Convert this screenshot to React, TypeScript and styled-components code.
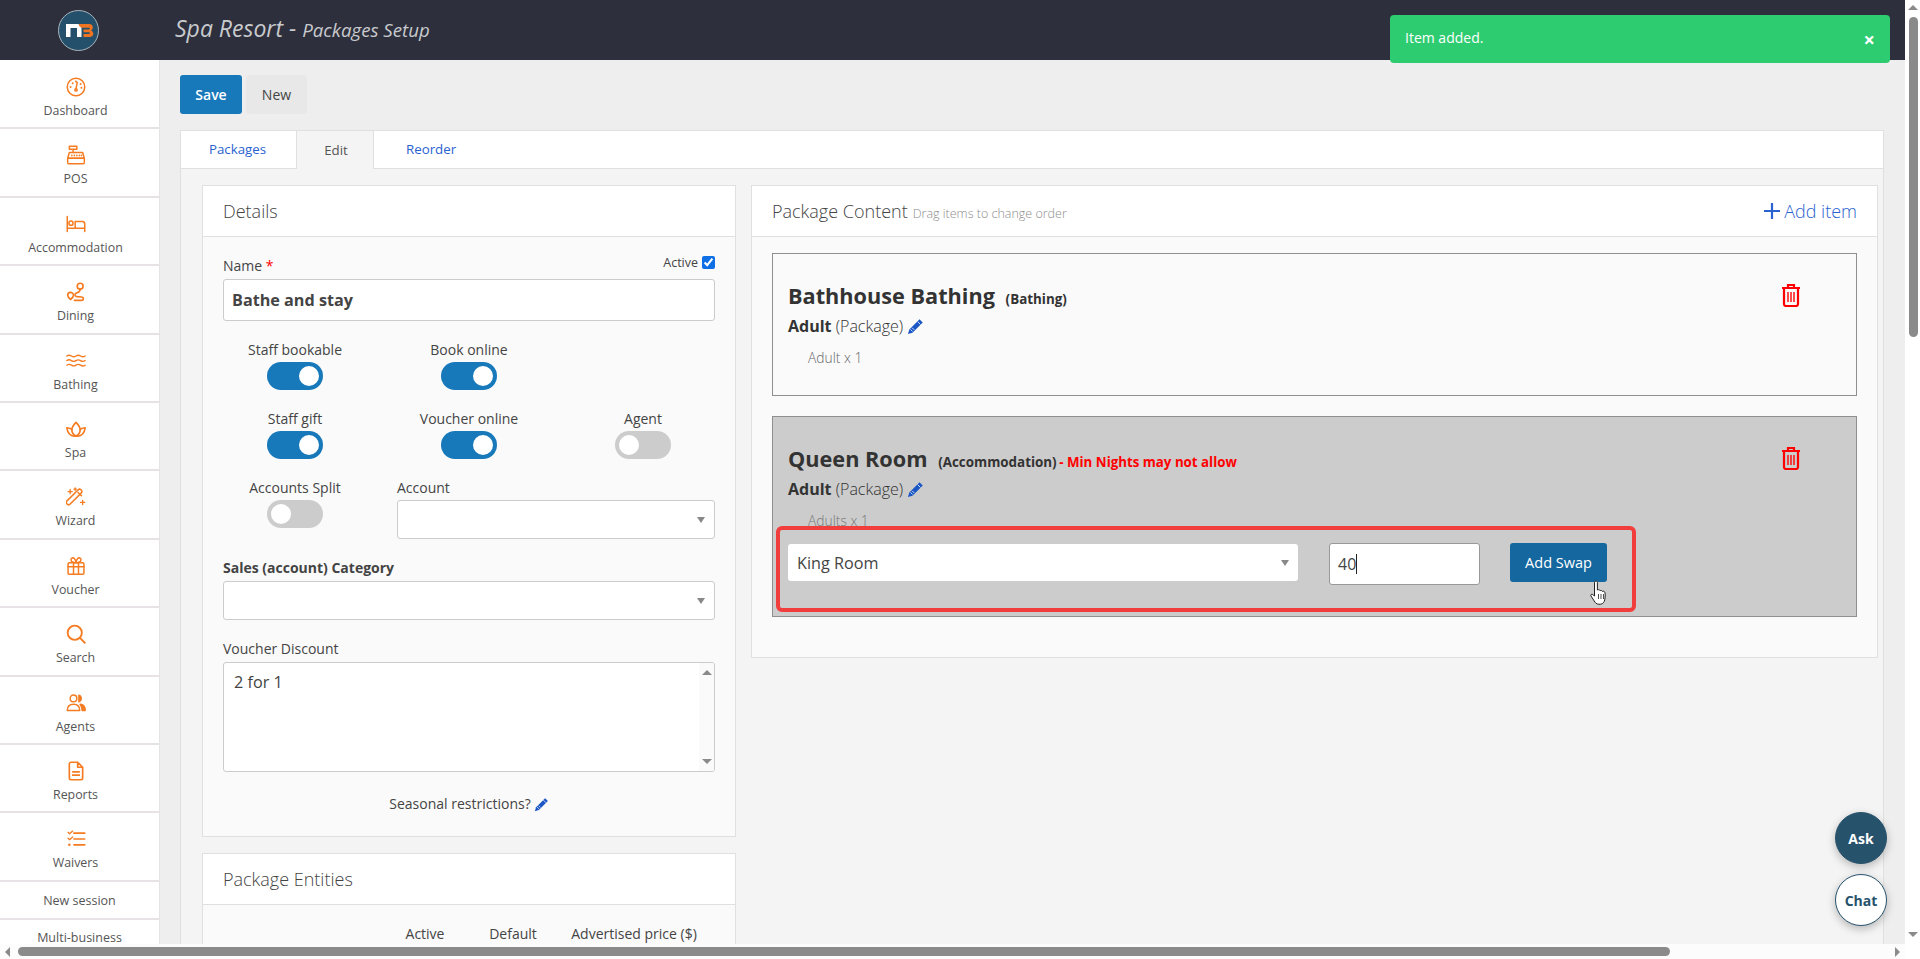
import React from "react";
import styled, { createGlobalStyle } from "styled-components";

const Global = createGlobalStyle`
  html, body { margin: 0; padding: 0; height: 100%; overflow: hidden; background: #fff; }
  * { box-sizing: border-box; }
  body { font-family: "Open Sans", "Liberation Sans", sans-serif; color: #444; }
`;

const Shell = styled.div`
  display: grid;
  grid-template-columns: 1905px 15px;
  grid-template-rows: 944px 15px;
  width: 1920px;
  height: 959px;
  overflow: hidden;
  position: relative;
`;
const Viewport = styled.div`
  overflow: hidden;
  display: flex;
  flex-direction: column;
  background: #eee;
  position: relative;
`;
const VBar = styled.div`
  background: #fff;
  display: flex;
  flex-direction: column;
  align-items: center;
  justify-content: space-between;
  padding: 5px 0 7px;
`;
const HBar = styled.div`
  background: #fcfcfc;
  display: flex;
  align-items: center;
  padding: 0 5px 0 5px;
`;
const Arrow = styled.span<{ $dir: "up" | "down" | "left" | "right" }>`
  width: 0;
  height: 0;
  flex: none;
  ${(p) =>
    p.$dir === "up"
      ? "border-left:5px solid transparent;border-right:5px solid transparent;border-bottom:5px solid #8a8a8a;"
      : p.$dir === "down"
      ? "border-left:5px solid transparent;border-right:5px solid transparent;border-top:5px solid #8a8a8a;"
      : p.$dir === "left"
      ? "border-top:5px solid transparent;border-bottom:5px solid transparent;border-right:5px solid #8a8a8a;"
      : "border-top:5px solid transparent;border-bottom:5px solid transparent;border-left:5px solid #8a8a8a;"}
`;
const VThumb = styled.div`
  width: 9px;
  height: 320px;
  margin: 7px 0 auto 2px;
  border-radius: 5px;
  background: #8a8a8a;
`;
const HThumb = styled.div`
  width: 1652px;
  height: 9px;
  margin: 0 auto 0 8px;
  border-radius: 5px;
  background: #8a8a8a;
`;
const Corner = styled.div`
  background: #fff;
`;

const Header = styled.header`
  flex: none;
  height: 60px;
  background: #2d2f3c;
  display: flex;
  align-items: center;
  padding-left: 58px;
`;
const Brand = styled.svg`
  width: 41px;
  height: 41px;
  flex: none;
  margin-right: 76px;
`;
const Title = styled.div`
  color: #c8cacd;
  font-style: italic;
  font-size: 23px;
  font-weight: 400;
  margin-top: -4px;
  white-space: nowrap;
  small {
    font-size: 18.7px;
  }
`;
const Toast = styled.div`
  position: absolute;
  left: 1390px;
  top: 15px;
  width: 500px;
  height: 48px;
  border-radius: 4px;
  background: #2ecc71;
  color: #fff;
  font-size: 14px;
  padding: 0 15px 3px;
  display: flex;
  align-items: center;
  justify-content: space-between;
  z-index: 5;
`;
const ToastClose = styled.span`
  font-size: 20px;
  font-weight: 700;
  line-height: 1;
  margin-top: 5px;
`;

const Body = styled.div`
  flex: 1;
  display: flex;
  min-height: 0;
`;
const Sidebar = styled.nav`
  width: 160px;
  flex: none;
  background: #fff;
  border-right: 1px solid #e4e4e4;
  overflow: hidden;
  padding-top: 1px;
`;
const NavItem = styled.div`
  height: 68.4px;
  border-bottom: 2px solid #e6e2e6;
  display: flex;
  flex-direction: column;
  align-items: center;
  padding: 16px 8px 0 0;
  font-size: 12.4px;
  color: #555;
  svg {
    width: 20px;
    height: 20px;
    flex: none;
    color: #f57c22;
    margin-bottom: 4px;
  }
  span {
    line-height: 20px;
  }
`;
const NavLink = styled.div`
  height: 38px;
  border-bottom: 2px solid #e6e2e6;
  display: flex;
  align-items: center;
  justify-content: center;
  font-size: 12.5px;
  line-height: 13px;
  color: #555;
  padding-top: 2px;
  &:last-child {
    border: 0;
    height: 24px;
    padding-top: 11px;
    align-items: flex-start;
  }
`;

const Main = styled.main`
  flex: 1;
  min-width: 0;
  padding: 15px 21px 0 20px;
`;
const Toolbar = styled.div`
  display: flex;
  gap: 4px;
  height: 39px;
  margin-bottom: 16px;
`;
const Btn = styled.button<{ $primary?: boolean }>`
  border: 0;
  border-radius: 3px;
  font-family: inherit;
  font-size: 14px;
  font-weight: ${(p) => (p.$primary ? 600 : 400)};
  width: ${(p) => (p.$primary ? 62 : 61)}px;
  background: ${(p) => (p.$primary ? "#1778ba" : "#e8e8e8")};
  color: ${(p) => (p.$primary ? "#fff" : "#444")};
`;
const Tabs = styled.div`
  display: flex;
  height: 39px;
  background: #fff;
  border: 1px solid #e0e0e0;
  border-bottom: 0;
  font-size: 13.3px;
`;
const Tab = styled.div<{ $active?: boolean; $w?: number }>`
  width: ${(p) => (p.$w ? `${p.$w}px` : "auto")};
  flex: ${(p) => (p.$w ? "none" : "1")};
  display: flex;
  align-items: center;
  justify-content: ${(p) => (p.$w ? "center" : "flex-start")};
  padding: ${(p) => (p.$w ? (p.$active ? "0 0 1px 2px" : "0 2px 1px 0") : "0 0 1px 32px")};
  color: ${(p) => (p.$active ? "#555" : "#2a62d0")};
  background: ${(p) => (p.$active ? "#f4f4f4" : "#fff")};
  border-right: ${(p) => (p.$w ? "1px solid #e0e0e0" : "0")};
  border-bottom: ${(p) => (p.$active ? "0" : "1px solid #e0e0e0")};
`;
const Panel = styled.div`
  background: #f4f4f4;
  border: 1px solid #e0e0e0;
  border-top: 0;
  border-bottom: 0;
  padding: 16px 6px 0 21px;
  display: grid;
  grid-template-columns: 534px 1127px;
  gap: 15px;
  align-items: start;
  height: 780px;
`;
const Column = styled.div`
  display: flex;
  flex-direction: column;
  gap: 16px;
`;
const Card = styled.section`
  background: #fafafa;
  border: 1px solid #e0e0e0;
`;
const CardHead = styled.div`
  height: 51px;
  background: #fff;
  border-bottom: 1px solid #e0e0e0;
  display: flex;
  align-items: center;
  justify-content: space-between;
  padding: 0 20px;
  font-size: 18px;
  font-weight: 300;
  color: #444;
  small {
    font-size: 12.5px;
    color: #8d8d8d;
    margin-left: 5px;
  }
`;
const AddItem = styled.div`
  display: flex;
  align-items: center;
  color: #2a62d0;
  font-size: 18px;
  font-weight: 300;
  gap: 3px;
  svg {
    width: 18px;
    height: 18px;
  }
`;
const FormBody = styled.div`
  padding: 18px 20px 0;
  height: 599px;
`;
const LabelRow = styled.div`
  display: flex;
  justify-content: space-between;
  align-items: flex-start;
  font-size: 14px;
  height: 24px;
  line-height: 20px;
  padding-top: 1px;
`;
const Req = styled.span`
  color: #f00;
`;
const ActiveWrap = styled.label`
  display: flex;
  align-items: center;
  gap: 4px;
  font-size: 12.5px;
  margin-top: -3px;
  input {
    width: 13px;
    height: 13px;
    margin: 0 0 1px;
    accent-color: #0f70e6;
  }
`;
const NameInput = styled.input`
  width: 100%;
  height: 42px;
  display: block;
  border: 1px solid #ccc;
  border-radius: 3px;
  background: #fff;
  font: 700 16.2px "Open Sans", sans-serif;
  color: #444;
  padding: 0 8px;
  outline: 0;
`;
const ToggleGrid = styled.div`
  display: grid;
  grid-template-columns: repeat(3, 174px);
  margin: 20px -15px 0;
  row-gap: 13px;
`;
const ToggleCell = styled.div`
  display: flex;
  flex-direction: column;
  align-items: center;
  font-size: 14px;
  line-height: 18px;
  height: 56px;
  gap: 3px;
`;
const AccountCell = styled.div`
  grid-column: span 2;
  padding: 0 15px;
  font-size: 14px;
  line-height: 18px;
`;
const AccountSelectSlot = styled.div`
  margin-top: 3px;
`;
const Toggle = styled.span<{ $on?: boolean }>`
  display: flex;
  flex: none;
  width: 56px;
  height: 28px;
  border-radius: 14px;
  align-items: center;
  padding: 0 4px;
  justify-content: ${(p) => (p.$on ? "flex-end" : "flex-start")};
  background: ${(p) => (p.$on ? "#1778ba" : "#ccc")};
  &::after {
    content: "";
    width: 20px;
    height: 20px;
    border-radius: 50%;
    background: #fff;
  }
`;
const SelectBox = styled.div`
  height: 39px;
  background: #fff;
  border: 1px solid #ccc;
  border-radius: 3px;
  display: flex;
  align-items: center;
  padding: 0 9px 0 8px;
  font-size: 16.2px;
  color: #444;
  &::after {
    content: "";
    margin-left: auto;
    border-left: 4px solid transparent;
    border-right: 4px solid transparent;
    border-top: 6px solid #888;
  }
`;
const BoldLabel = styled.div`
  font-size: 14px;
  font-weight: 700;
  line-height: 20px;
  margin: 19px 0 3px;
`;
const PlainLabel = styled.div`
  font-size: 14px;
  line-height: 20px;
  margin: 19px 0 3px;
`;
const TextBox = styled.div`
  height: 110px;
  background: #fff;
  border: 1px solid #ccc;
  border-radius: 3px;
  display: flex;
  justify-content: space-between;
  font-size: 16.2px;
  padding: 8px 0 0 10px;
  overflow: hidden;
`;
const TextScroll = styled.div`
  width: 15px;
  margin-top: -8px;
  background: #fafafa;
  display: flex;
  flex-direction: column;
  justify-content: space-between;
  align-items: center;
  padding: 7px 0;
`;
const Seasonal = styled.div`
  margin-top: 22px;
  display: flex;
  justify-content: center;
  align-items: center;
  gap: 3px;
  font-size: 14px;
  line-height: 20px;
`;
const Pencil = styled.svg<{ $big?: boolean }>`
  width: ${(p) => (p.$big ? 17 : 15)}px;
  height: ${(p) => (p.$big ? 17 : 15)}px;
  flex: none;
`;
const EntityBody = styled.div`
  height: 60px;
  padding-top: 19px;
  display: grid;
  grid-template-columns: 178px 88px 88px 154px;
  font-size: 14px;
  line-height: 20px;
  text-align: center;
  white-space: nowrap;
`;
const ContentBody = styled.div`
  padding: 16px 20px 40px;
  display: flex;
  flex-direction: column;
  gap: 20px;
`;
const Item = styled.div<{ $muted?: boolean }>`
  border: 1px solid #8f8f8f;
  background: ${(p) => (p.$muted ? "#ccc" : "#fafafa")};
  padding: 25px 15px ${(p) => (p.$muted ? "31px" : "20px")} 15px;
`;
const ItemTitle = styled.div`
  height: 32px;
  display: flex;
  align-items: center;
  justify-content: space-between;
  padding-right: 36px;
  font-weight: 700;
  font-size: 21.7px;
  color: #333;
  white-space: nowrap;
`;
const ItemTitleText = styled.div`
  small {
    font-size: 13.4px;
    margin-left: 5px;
  }
  em {
    font-style: normal;
    font-size: 13.3px;
    color: #f00;
    margin-left: -3px;
  }
`;
const Trash = styled.svg`
  width: 22px;
  height: 24px;
  color: #f00;
  margin-right: 3px;
`;
const ItemSub = styled.div`
  height: 30px;
  display: flex;
  align-items: center;
  gap: 4px;
  font-size: 16px;
  font-weight: 300;
  color: #333;
  b {
    font-weight: 700;
  }
`;
const ItemContent = styled.div<{ $muted?: boolean }>`
  height: 34px;
  display: flex;
  align-items: center;
  padding: 0 0 2px 20px;
  font-size: 13.8px;
  font-weight: 300;
  color: ${(p) => (p.$muted ? "#777" : "#666")};
`;
const SwapRow = styled.div`
  position: relative;
  display: flex;
  align-items: flex-start;
  margin-top: 5px;
`;
const SwapSelect = styled(SelectBox)`
  width: 510px;
  height: 37px;
  margin: 1px 31px 0 0;
  border: 0;
  padding: 0 9px 0 9px;
`;
const SwapInput = styled.div`
  width: 151px;
  height: 42px;
  background: #fff;
  border: 1px solid #999;
  border-radius: 3px;
  margin-right: 30px;
  display: flex;
  align-items: center;
  padding-left: 8px;
  font-size: 16px;
  &::after {
    content: "";
    width: 1px;
    height: 20px;
    background: #222;
  }
`;
const SwapBtn = styled.button`
  width: 97px;
  height: 39px;
  border: 0;
  border-radius: 3px;
  background: #14679f;
  color: #fff;
  font: 400 14.5px "Open Sans", sans-serif;
`;
const Highlight = styled.div`
  position: absolute;
  left: -12px;
  top: -17px;
  width: 860px;
  height: 86px;
  border: 4px solid #f23d3d;
  border-radius: 6px;
  pointer-events: none;
`;
const HandCursor = styled.svg`
  position: absolute;
  left: 802px;
  top: 37px;
  width: 18px;
  height: 25px;
`;
const Fab = styled.div<{ $filled?: boolean }>`
  position: absolute;
  left: 1835px;
  top: ${(p) => (p.$filled ? 812 : 874)}px;
  width: 52px;
  height: 52px;
  border-radius: 50%;
  border: 1px solid #27526c;
  background: ${(p) => (p.$filled ? "#27526c" : "#fff")};
  color: ${(p) => (p.$filled ? "#fff" : "#27526c")};
  display: flex;
  align-items: center;
  justify-content: center;
  font-weight: 700;
  font-size: 14px;
  box-shadow: 0 3px 8px rgba(0, 0, 0, 0.25);
  z-index: 6;
`;

const ic = { fill: "none", stroke: "currentColor", strokeWidth: 1.8, strokeLinecap: "round", strokeLinejoin: "round" } as const;

const PencilIcon = ({ big }: { big?: boolean }) => (
  <Pencil $big={big} viewBox="0 0 16 16">
    <path d="M11.8 1.2l3 3-9.600 9.600-4.300 1.300 1.300-4.300z" fill="#1a56c4" />
    <path d="M3.300 10.700l2 2M4.800 9.200l2 2M10 3.400l2.600 2.600" stroke="#dbe7ff" strokeWidth=".9" fill="none" />
  </Pencil>
);
const TrashIcon = () => (
  <Trash viewBox="0 0 22 24" fill="none" stroke="currentColor" strokeWidth="2.200">
    <path d="M2 5h18M8 5V2h6v3M4 5v16a2 2 0 0 0 2 2h10a2 2 0 0 0 2-2V5" />
    <path d="M8 9v10M11 9v10M14 9v10" strokeWidth="1.400" />
  </Trash>
);

const icons: Record<string, React.ReactNode> = {
  Dashboard: (
    <svg viewBox="0 0 24 24" {...ic}>
      <circle cx="12" cy="12" r="10.500" />
      <path d="M12 14l1.500-7.500" />
      <circle cx="12" cy="15.500" r="1.400" />
      <path d="M5.500 12h.01M8 7.500h.01M12 5.500h.01M17.500 8.500h.01M18.500 13h.01" strokeWidth="2.400" />
    </svg>
  ),
  POS: (
    <svg viewBox="0 0 24 24" {...ic}>
      <path d="M4 1.500h9v3.500H4zM8.500 5v4" />
      <path d="M4 9h16l2 7H2z" />
      <path d="M2 16h20v5a1.500 1.500 0 0 1-1.500 1.500h-17A1.500 1.500 0 0 1 2 21z" />
      <path d="M7 12.500h.01M10 12.500h.01M13 12.500h.01M16 12.500h.01M18.500 12.500h.01" strokeWidth="2" />
    </svg>
  ),
  Accommodation: (
    <svg viewBox="0 0 24 24" {...ic}>
      <path d="M1.500 3v18M1.500 17h21M22.500 21v-9a3 3 0 0 0-3-3H11v8" />
      <circle cx="6" cy="11" r="2.500" />
    </svg>
  ),
  Dining: (
    <svg viewBox="0 0 24 24" {...ic} strokeWidth="2">
      <circle cx="17" cy="5" r="3.500" />
      <path d="M17 8.500c0 3-1 4-4 4.500-3 .5-3 4 0 4.500l6 .5c2.500.5 2.500 3.500 0 4H10" />
      <path d="M5.500 21s-3.500-2.800-3.500-5a3.500 3.500 0 0 1 7 0c0 2.200-3.500 5-3.500 5z" />
    </svg>
  ),
  Bathing: (
    <svg viewBox="0 0 24 24" {...ic} strokeWidth="1.600">
      <path d="M1 6c1.800-1.300 3.500-1.300 5.500 0s3.500 1.300 5.500 0 3.500-1.300 5.500 0 3.700 1.300 5.500 0M1 11.500c1.800-1.300 3.500-1.300 5.500 0s3.500 1.300 5.500 0 3.500-1.300 5.500 0 3.700 1.300 5.500 0M1 17c1.800-1.300 3.500-1.300 5.500 0s3.500 1.300 5.500 0 3.500-1.300 5.500 0 3.700 1.300 5.500 0" />
    </svg>
  ),
  Spa: (
    <svg viewBox="0 0 24 24" {...ic} strokeWidth="2">
      <path d="M12 20.500c-3.500-1.500-5-4.500-5-7.500 0-3 2.500-6.500 5-9 2.500 2.500 5 6 5 9 0 3-1.500 6-5 7.500z" />
      <path d="M12 20.500C6 21.500 1.500 17 1 10.500c2 0 4 .5 6 2M12 20.500c6 1 10.500-3.500 11-10-2 0-4 .5-6 2" />
    </svg>
  ),
  Wizard: (
    <svg viewBox="0 0 24 24" {...ic}>
      <rect x="-2.300" y="9.300" width="24" height="5.400" rx="2.700" transform="rotate(-45 9.700 12)" />
      <path d="M14.500 6.500l4 4" />
      <path d="M5 3v5M2.500 5.500h5M11 1v3M9.500 2.500h3M20 16v5M17.500 18.500h5" strokeWidth="1.600" />
    </svg>
  ),
  Voucher: (
    <svg viewBox="0 0 24 24" {...ic}>
      <rect x="2.500" y="8" width="19" height="14" rx="1.500" />
      <path d="M2.500 13h19M9 8v14M15 8v14M12 8C9 8 6 7 6 4.500 6 2.500 8.500 1.500 10 3c1.500 1.500 2 3 2 5zM12 8c3 0 6-1 6-3.500 0-2-2.500-3-4-1.500-1.500 1.500-2 3-2 5z" />
    </svg>
  ),
  Search: (
    <svg viewBox="0 0 24 24" {...ic} strokeWidth="2.200">
      <circle cx="10.500" cy="10.500" r="8.500" />
      <path d="M17 17l5.500 5.500" />
    </svg>
  ),
  Agents: (
    <svg viewBox="0 0 24 24" {...ic}>
      <circle cx="9" cy="6.500" r="4" />
      <path d="M1.500 21c0-5 3-7.500 7.500-7.500s7.500 2.500 7.500 7.500z" />
      <path d="M15.500 2.800a4 4 0 0 1 0 7.600z" fill="currentColor" />
      <path d="M17 13.500c3.500.3 6 3 6 7.500h-3.500c0-3-1-5.500-2.500-7.500z" fill="currentColor" />
    </svg>
  ),
  Reports: (
    <svg viewBox="0 0 24 24" {...ic} strokeWidth="2">
      <path d="M6 1.500h8l6 6v13a2 2 0 0 1-2 2H6a2 2 0 0 1-2-2v-17a2 2 0 0 1 2-2zM14 1.500v6h6" />
      <path d="M8 13h8M8 17h8" />
    </svg>
  ),
  Waivers: (
    <svg viewBox="0 0 24 24" {...ic} strokeWidth="2">
      <path d="M9.500 5h13M9.500 12h13M9.500 19h13" />
      <path d="M2.500 4l1.800 1.800L8 2.500M2.500 11l1.800 1.800L8 9.500" strokeWidth="1.600" />
      <path d="M4 19h.01" strokeWidth="3" />
    </svg>
  ),
};

const Logo = () => (
  <Brand viewBox="0 0 41 41">
    <circle cx="20.500" cy="20.500" r="20" fill="#24506c" stroke="#aab4ba" strokeWidth="1" />
    <path d="M8 14h11c2.800 0 4.500 1.800 4.500 4.500V27H19v-9h-6.500v9H8z" fill="#fff" />
    <path d="M21 14h10c2.700 0 3.800 1.400 3.800 3.300 0 1.700-.7 2.700-1.800 3.200 1.300.5 2.300 1.700 2.300 3.300 0 2-1.300 3.200-3.800 3.200h-6v-3h5c1 0 1.500-.4 1.500-.9s-.5-.9-1.500-.9h-5v-2.700h5c1 0 1.400-.4 1.400-.9s-.4-.9-1.400-.9h-7.500c-.5-.9-1-1.300-2-1.700z" fill="#ee7421" />
  </Brand>
);

const ToggleField = ({ label, on }: { label: string; on?: boolean }) => (
  <ToggleCell>
    {label}
    <Toggle $on={on} />
  </ToggleCell>
);

const navs = ["Dashboard", "POS", "Accommodation", "Dining", "Bathing", "Spa", "Wizard", "Voucher", "Search", "Agents", "Reports", "Waivers"];

export default function App() {
  return (
    <>
      <Global />
      <Shell>
        <Viewport>
          <Header>
            <Logo />
            <Title>
              Spa Resort - <small>Packages Setup</small>
            </Title>
          </Header>
          <Toast>
            Item added.
            <ToastClose>×</ToastClose>
          </Toast>
          <Body>
            <Sidebar>
              {navs.map((n) => (
                <NavItem key={n}>
                  {icons[n]}
                  <span>{n}</span>
                </NavItem>
              ))}
              <NavLink>New session</NavLink>
              <NavLink>Multi-business</NavLink>
            </Sidebar>
            <Main>
              <Toolbar>
                <Btn $primary>Save</Btn>
                <Btn>New</Btn>
              </Toolbar>
              <Tabs>
                <Tab $w={116}>Packages</Tab>
                <Tab $w={77} $active>
                  Edit
                </Tab>
                <Tab>Reorder</Tab>
              </Tabs>
              <Panel>
                <Column>
                  <Card>
                    <CardHead>Details</CardHead>
                    <FormBody>
                      <LabelRow>
                        <span>
                          Name <Req>*</Req>
                        </span>
                        <ActiveWrap>
                          Active <input type="checkbox" defaultChecked />
                        </ActiveWrap>
                      </LabelRow>
                      <NameInput readOnly value="Bathe and stay" />
                      <ToggleGrid>
                        <ToggleField label="Staff bookable" on />
                        <ToggleField label="Book online" on />
                        <span />
                        <ToggleField label="Staff gift" on />
                        <ToggleField label="Voucher online" on />
                        <ToggleField label="Agent" />
                        <ToggleField label="Accounts Split" />
                        <AccountCell>
                          Account
                          <AccountSelectSlot>
                            <SelectBox />
                          </AccountSelectSlot>
                        </AccountCell>
                      </ToggleGrid>
                      <BoldLabel>Sales (account) Category</BoldLabel>
                      <SelectBox />
                      <PlainLabel>Voucher Discount</PlainLabel>
                      <TextBox>
                        2 for 1
                        <TextScroll>
                          <Arrow $dir="up" />
                          <Arrow $dir="down" />
                        </TextScroll>
                      </TextBox>
                      <Seasonal>
                        Seasonal restrictions? <PencilIcon />
                      </Seasonal>
                    </FormBody>
                  </Card>
                  <Card>
                    <CardHead>Package Entities</CardHead>
                    <EntityBody>
                      <span />
                      <span>Active</span>
                      <span>Default</span>
                      <span>Advertised price ($)</span>
                    </EntityBody>
                  </Card>
                </Column>
                <Card>
                  <CardHead>
                    <div>
                      Package Content<small>Drag items to change order</small>
                    </div>
                    <AddItem>
                      <svg viewBox="0 0 18 18">
                        <path d="M9 1v16M1 9h16" stroke="currentColor" strokeWidth="2.200" />
                      </svg>
                      Add item
                    </AddItem>
                  </CardHead>
                  <ContentBody>
                    <Item>
                      <ItemTitle>
                        <ItemTitleText>
                          Bathhouse Bathing <small>(Bathing)</small>
                        </ItemTitleText>
                        <TrashIcon />
                      </ItemTitle>
                      <ItemSub>
                        <span>
                          <b>Adult</b> (Package)
                        </span>
                        <PencilIcon big />
                      </ItemSub>
                      <ItemContent>Adult x 1</ItemContent>
                    </Item>
                    <Item $muted>
                      <ItemTitle>
                        <ItemTitleText>
                          Queen Room <small>(Accommodation)</small> <em>- Min Nights may not allow</em>
                        </ItemTitleText>
                        <TrashIcon />
                      </ItemTitle>
                      <ItemSub>
                        <span>
                          <b>Adult</b> (Package)
                        </span>
                        <PencilIcon big />
                      </ItemSub>
                      <ItemContent $muted>Adults x 1</ItemContent>
                      <SwapRow>
                        <SwapSelect>King Room</SwapSelect>
                        <SwapInput>40</SwapInput>
                        <SwapBtn>Add Swap</SwapBtn>
                        <Highlight />
                        <HandCursor viewBox="0 0 18 25">
                          <path
                            d="M5 1.500c1-.8 2.300-.3 2.400 1V10l1-.3c1 0 1.500.3 1.700 1 .8-.5 2-.3 2.300.7 1-.5 2.200 0 2.500 1 .5 2 .3 5-.2 7.500-.3 2-1.700 4-4 4.300-2.500.3-4.500-.3-5.700-2L1 16c-.7-1 .5-2.300 1.700-1.500L4.500 16V3c0-.6.100-1.100.5-1.500z"
                            fill="#fff"
                            stroke="#222"
                            strokeWidth="1"
                          />
                          <path d="M8.500 14v5M11 14v5M13.500 14v5" stroke="#222" strokeWidth=".8" />
                        </HandCursor>
                      </SwapRow>
                    </Item>
                  </ContentBody>
                </Card>
              </Panel>
            </Main>
          </Body>
          <Fab $filled>Ask</Fab>
          <Fab>Chat</Fab>
        </Viewport>
        <VBar>
          <Arrow $dir="up" />
          <VThumb />
          <Arrow $dir="down" />
        </VBar>
        <HBar>
          <Arrow $dir="left" />
          <HThumb />
          <Arrow $dir="right" />
        </HBar>
        <Corner />
      </Shell>
    </>
  );
}
